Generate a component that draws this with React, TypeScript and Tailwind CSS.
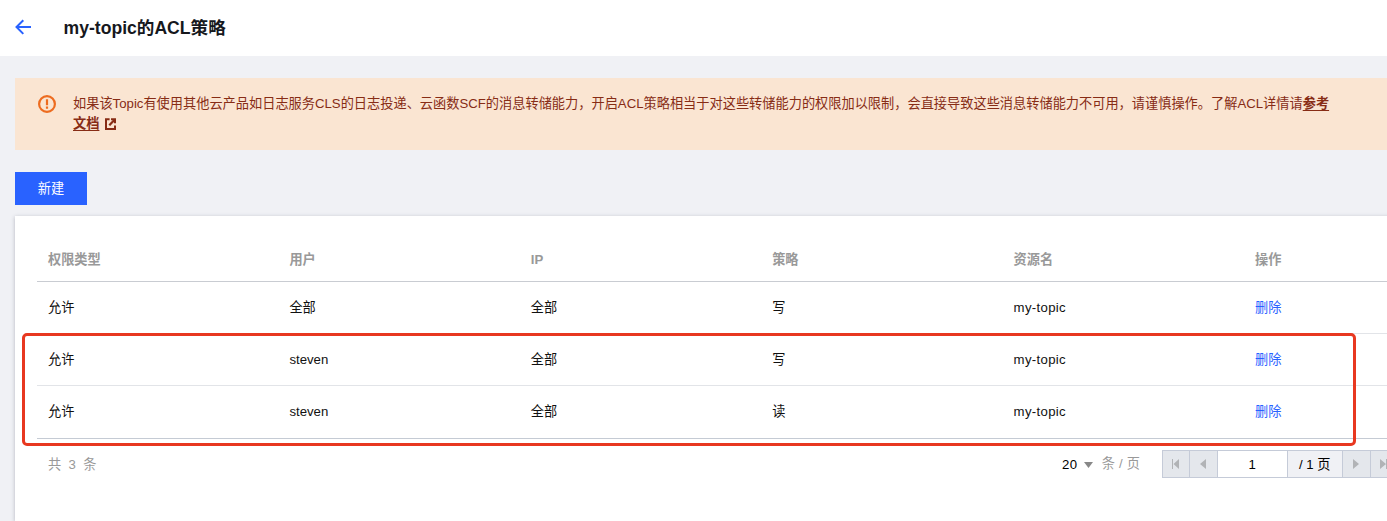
const columns = ["权限类型", "用户", "IP", "策略", "资源名", "操作"];

const rules = [
  { type: "允许", user: "全部", ip: "全部", policy: "写", resource: "my-topic" },
  { type: "允许", user: "steven", ip: "全部", policy: "写", resource: "my-topic" },
  { type: "允许", user: "steven", ip: "全部", policy: "读", resource: "my-topic" },
];

function Header() {
  return (
    <header className="flex h-14 items-center bg-white">
      <button className="ml-[14px] mr-[31.5px] h-[18px] w-[18px]">
        <svg width="18" height="18" viewBox="0 0 18 18" fill="none" stroke="#2962ff" strokeWidth="2">
          <path d="M9.3 1.2 2.5 8l6.8 6.9M2.5 8H17" />
        </svg>
      </button>
      <h1 className="text-[17.6px] font-bold leading-6 text-[#16181d]">my-topic的ACL策略</h1>
    </header>
  );
}

function WarningAlert() {
  return (
    <div className="mt-[22px] flex h-[72px] bg-[#fae5d2] pl-[23px] pt-4 text-[#872c15]">
      <svg className="mt-px shrink-0" width="18" height="18" viewBox="0 0 18 18" fill="none" stroke="#ed6c20" strokeWidth="2.2">
        <circle cx="9" cy="9" r="7.9" />
        <path d="M9 4.3v6M9 11.6v2.1" />
      </svg>
      <p className="ml-[17px] whitespace-nowrap leading-5 tracking-[0.01px]">
        如果该Topic有使用其他云产品如日志服务CLS的日志投递、云函数SCF的消息转储能力，开启ACL策略相当于对这些转储能力的权限加以限制，会直接导致这些消息转储能力不可用，请谨慎操作。了解ACL详情请
        <a className="font-bold underline underline-offset-2">
          参考
          <br />
          文档
        </a>
        <svg className="ml-[6px] inline-block align-[-2px]" width="11" height="12" viewBox="0 0 11 12" fill="none" stroke="currentColor" strokeWidth="2">
          <path d="M4.6 1.2H1V11h9V7.6" />
          <path d="M6 1.2h4v4" />
          <path d="M9.8 1.4 4.3 7.2" strokeWidth="2.2" />
        </svg>
      </p>
    </div>
  );
}

function RuleTable() {
  return (
    <div className="w-[1449px]">
      <div className="grid h-[44px] grid-cols-[repeat(6,241.4px)] items-center border-b border-[#c9ccd2] font-bold text-[#999]">
        {columns.map((name) => (
          <div key={name} className="pl-[11px]">{name}</div>
        ))}
      </div>
      <div className="border-b border-[#c5cbd4]">
        {rules.map((rule, i) => (
          <div
            key={i}
            className="grid h-[52px] grid-cols-[repeat(6,241.4px)] items-center border-b border-[#e2e4e8] last:border-white"
          >
            <div className="pl-[11px]">{rule.type}</div>
            <div className="pl-[11px]">{rule.user}</div>
            <div className="pl-[11px]">{rule.ip}</div>
            <div className="pl-[11px]">{rule.policy}</div>
            <div className="pl-[11px] tracking-[0.33px]">{rule.resource}</div>
            <div className="pl-[11px]">
              <a className="text-[#2962ff]">删除</a>
            </div>
          </div>
        ))}
      </div>
    </div>
  );
}

function PageButton({ path }: { path: string }) {
  return (
    <button className="flex h-full w-7 shrink-0 items-center justify-center border-r border-[#c5cbd8] bg-[#e4e7ec] first:w-[27px]">
      <svg width="8" height="10" viewBox="0 0 8 10" fill="#b1b3b6">
        <path d={path} />
      </svg>
    </button>
  );
}

function Pagination() {
  return (
    <div className="flex h-[50px] items-center">
      <span className="ml-[11px] w-[1014px] whitespace-pre pt-px text-[#999]">共  3  条</span>
      <span className="pt-px text-black tracking-[0.3px]">20</span>
      <svg className="ml-[7px] mt-px" width="9" height="6" viewBox="0 0 9 6" fill="#888">
        <path d="M0 0h9L4.5 6z" />
      </svg>
      <span className="ml-[8.5px] w-[60px] shrink-0 tracking-[0.2px] text-[#999]">条 / 页</span>
      <div className="flex h-7 shrink-0 border border-[#c5cbd8] text-black">
        <PageButton path="M0 0h1v10H0zM7 0v10L1.5 5z" />
        <PageButton path="M7 0v10L1 5z" />
        <div className="flex w-[70px] items-center justify-center border-r border-[#c5cbd8] bg-white pt-px">1</div>
        <div className="flex w-[55px] items-center justify-center border-r border-[#c5cbd8] bg-[#f0f1f5] pt-px">/ 1 页</div>
        <PageButton path="M1 0v10l6-5z" />
        <PageButton path="M0 0v10l6-5zM6 0h1v10H6z" />
      </div>
    </div>
  );
}

export default function App() {
  return (
    <div className="relative flex h-[521px] w-full flex-col overflow-hidden bg-[#f0f1f5] font-['Liberation_Sans','Noto_Sans_CJK_SC',sans-serif] text-[13.2px] leading-5 text-[#111]">
      <Header />
      <main className="flex flex-1 flex-col pl-[15px]">
        <WarningAlert />
        <button className="mt-[22px] h-[33px] w-[72px] bg-[#2962ff] text-white">新建</button>
        <section className="mt-[11px] w-[1500px] flex-1 bg-white pl-[22px] pt-[22px] shadow-[0_1px_4px_rgba(54,58,80,0.32)]">
          <RuleTable />
          <Pagination />
        </section>
      </main>
      {/* Highlight around steven's rules */}
      <div className="pointer-events-none absolute left-[22px] top-[333px] h-[113px] w-[1334px] rounded-[5px] border-3 border-[#e83820]" />
    </div>
  );
}
